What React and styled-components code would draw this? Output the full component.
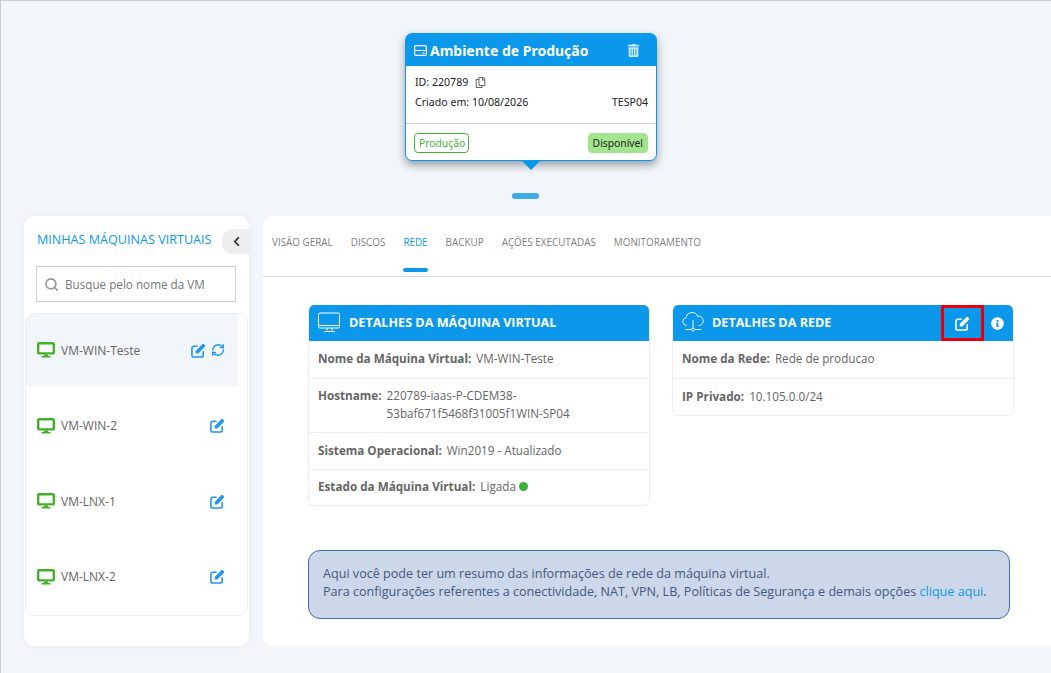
import React from 'react'
import styled, { createGlobalStyle } from 'styled-components'
import { FaTrashAlt, FaRegCopy, FaInfoCircle, FaChevronLeft } from 'react-icons/fa'
import { Search, RefreshCw } from 'lucide-react'

const BLUE = '#0b98eb'

const GlobalStyle = createGlobalStyle`
  html, body {
    margin: 0;
    padding: 0;
    background: #f2f5f9;
  }
  * {
    box-sizing: border-box;
  }
`

const Page = styled.div`
  width: 1051px;
  height: 673px;
  overflow: hidden;
  border-top: 1px solid #c9ccd1;
  border-left: 1px solid #c9ccd1;
  background: #f2f5f9;
  font-family: 'Open Sans', sans-serif;
  display: flex;
  flex-direction: column;
`

const Top = styled.div`
  height: 215px;
  padding-top: 32px;
  display: flex;
  flex-direction: column;
  align-items: center;
`

const EnvCard = styled.div`
  position: relative;
  width: 252px;
  height: 128px;
  margin-left: 10px;
  border: 1px solid ${BLUE};
  border-radius: 7px;
  background: #fff;
  box-shadow: 0 4px 8px rgba(40, 50, 70, 0.45);
  font-family: 'Noto Sans', sans-serif;
  color: #222;

  &::after {
    content: '';
    position: absolute;
    left: 116px;
    bottom: -10px;
    border-left: 9px solid transparent;
    border-right: 9px solid transparent;
    border-top: 9px solid ${BLUE};
  }
`

const EnvHeader = styled.div`
  height: 32px;
  background: ${BLUE};
  border-radius: 5px 5px 0 0;
  color: #fff;
  display: flex;
  align-items: center;
  padding: 0 16px 0 8px;
  gap: 3px;
  font-size: 14px;
  font-weight: 700;

  span {
    flex: 1;
  }
`

const TrashIcon = styled(FaTrashAlt)`
  color: #c4e6fb;
`

const EnvBody = styled.div`
  height: 58px;
  padding: 6px 8px 0 9px;
  border-bottom: 1px solid #c9d2dc;
  font-size: 10.6px;
`

const EnvLine = styled.div`
  height: 20px;
  display: flex;
  align-items: center;
  justify-content: ${p => (p.$between ? 'space-between' : 'flex-start')};
  gap: 7px;

  svg {
    color: #666;
  }
`

const EnvFooter = styled.div`
  display: flex;
  justify-content: space-between;
  padding: 9px 8px 0 8px;
  font-size: 10.3px;
`

const Pill = styled.div`
  height: 20px;
  padding: 0 ${p => (p.$solid ? '4px' : '3px')} 0 4px;
  display: flex;
  align-items: center;
  border-radius: 4px;
  border: 1px solid ${p => (p.$solid ? '#a3e58f' : '#46b03c')};
  background: ${p => (p.$solid ? '#a3e58f' : '#fff')};
  color: ${p => (p.$solid ? '#222' : '#46b03c')};
`

const Handle = styled.div`
  width: 27px;
  height: 6px;
  margin: 32px 0 0 -2px;
  border-radius: 3px;
  background: #3fabeb;
`

const Main = styled.div`
  display: flex;
  gap: 14px;
  padding-left: 23px;
  height: 430px;
`

const Sidebar = styled.aside`
  position: relative;
  width: 225px;
  background: #fff;
  border-radius: 10px;
  box-shadow: 0 0 6px rgba(60, 80, 110, 0.06);
  padding-top: 15px;
`

const SideTitle = styled.div`
  padding-left: 13px;
  height: 18px;
  font-size: 12.6px;
  line-height: 18px;
  color: ${BLUE};
`

const Collapse = styled.button`
  position: absolute;
  top: 13px;
  right: 0;
  width: 27px;
  height: 25px;
  border: 0;
  padding: 0 0 0 2px;
  border-radius: 10px 0 0 10px;
  background: #eeeeee;
  color: #333;
  display: flex;
  align-items: center;
  justify-content: center;
`

const SearchBox = styled.div`
  margin: 17px 13px 11px 12px;
  height: 36px;
  border: 1px solid #ccd0d8;
  display: flex;
  align-items: center;
  gap: 6px;
  padding-left: 7px;
  font-size: 11.7px;
  color: #777;

  svg {
    color: #999;
  }
`

const VmList = styled.div`
  margin: 0 1px;
  height: 303px;
  border: 1px solid #eeeff1;
  border-radius: 10px;
  overflow: hidden;
`

const VmRow = styled.div`
  height: 72px;
  margin-bottom: 3.5px;
  width: ${p => (p.$active ? '212px' : '100%')};
  background: ${p => (p.$active ? '#f2f5f9' : 'transparent')};
  display: flex;
  align-items: center;
  padding: 0 ${p => (p.$active ? '13px' : '22px')} 0 11px;
  gap: 6px;
  font-size: 12px;
  color: #666;
`

const VmName = styled.span`
  flex: 1;
`

const VmActions = styled.div`
  display: flex;
  align-items: center;
  gap: 5px;
  color: #2196f3;
`

const Content = styled.section`
  flex: 1;
  background: #fff;
  border-radius: 10px 0 0 10px;
`

const Tabs = styled.nav`
  height: 61px;
  border-bottom: 1px solid #d8dbdf;
  display: flex;
  gap: 18px;
  padding-left: 9px;
`

const Tab = styled.div`
  position: relative;
  height: 60px;
  font-size: 9.9px;
  line-height: 52px;
  color: ${p => (p.$active ? BLUE : '#808080')};

  &::after {
    content: ${p => (p.$active ? "''" : 'none')};
    position: absolute;
    left: 0;
    right: 0;
    bottom: 4px;
    height: 4px;
    border-radius: 2px;
    background: ${BLUE};
  }
`

const Cards = styled.div`
  display: flex;
  align-items: flex-start;
  gap: 22px;
  padding: 28px 0 0 45px;
  height: 273px;
`

const Card = styled.div`
  width: 342px;
  border: 1px solid #eceef1;
  border-top: 0;
  border-radius: 6px;
  overflow: hidden;
  background: #fff;
`

const CardHeader = styled.header`
  height: 36px;
  padding: 0 0 2px 9px;
  background: ${BLUE};
  color: #fff;
  display: flex;
  align-items: center;
  gap: 8px;
  font-size: 12.6px;
  font-weight: 700;
`

const HeaderTitle = styled.span`
  flex: 1;
`

const EditBox = styled.div`
  width: 43px;
  height: 36px;
  margin-top: 2px;
  border: 3px solid #e8000b;
  display: flex;
  align-items: center;
  justify-content: center;
`

const InfoSlot = styled.div`
  width: 29px;
  margin: 2px 0 0 -8px;
  display: flex;
  justify-content: center;
  padding-right: 3px;
`

const Row = styled.div`
  display: flex;
  align-items: ${p => (p.$top ? 'flex-start' : 'center')};
  gap: 5px;
  min-height: ${p => p.$h || 37}px;
  padding: ${p => (p.$top ? '7px' : '0')} 9px ${p => (p.$top ? '0' : '3px')};
  font-size: 11.7px;
  line-height: 18px;
  color: #666;

  & + & {
    border-top: 1px solid #eceef1;
  }

  b {
    font-weight: 700;
    flex: none;
  }
`

const Dot = styled.i`
  display: inline-block;
  width: 9px;
  height: 9px;
  margin-left: -2px;
  border-radius: 50%;
  background: #3bb03b;
`

const Note = styled.div`
  width: 702px;
  height: 69px;
  margin-left: 45px;
  padding: 14px 14px;
  border: 1px solid #3f6cb0;
  border-radius: 12px;
  background: #ccd7e9;
  font-size: 12.6px;
  line-height: 18px;
  color: #43597e;

  a {
    color: ${BLUE};
  }
`

const ServerIcon = () => (
  <svg width="13" height="11" viewBox="0 0 13 11" fill="none" stroke="#fff" strokeWidth="1.2">
    <rect x="0.6" y="0.6" width="11.8" height="9.8" rx="1.5" />
    <path d="M0.6 5.5h11.8M8.5 8h2.2" />
  </svg>
)

const VmIcon = () => (
  <svg width="18" height="16" viewBox="0 0 18 16" style={{ flex: 'none' }}>
    <rect x="1.2" y="1.2" width="15.6" height="10.2" rx="1" fill="#fff" stroke="#43b02a" strokeWidth="2.4" />
    <path d="M7 12.5h4v1.5h2.5v1.5h-9V14H7z" fill="#43b02a" />
  </svg>
)

const EditIcon = ({ size = 15 }) => (
  <svg width={size} height={size} viewBox="0 0 16 16" style={{ flex: 'none' }}>
    <path
      d="M13 9.5V13a2 2 0 0 1-2 2H3a2 2 0 0 1-2-2V5.5a2 2 0 0 1 2-2h3.5"
      fill="none"
      stroke="currentColor"
      strokeWidth="1.7"
      strokeLinecap="round"
    />
    <path
      d="M5 8.4L11.8 1.5a1.6 1.6 0 0 1 2.3 0l.5.5a1.6 1.6 0 0 1 0 2.3L7.8 11.2H5z"
      fill="currentColor"
    />
  </svg>
)

const MonitorIcon = () => (
  <svg width="23" height="21" viewBox="0 0 23 21" fill="none" stroke="#fff" strokeWidth="1">
    <rect x="0.5" y="1" width="21" height="15" rx="1.5" />
    <path d="M0.5 13.5h21M9 16v2.5M14 16v2.5M6 19.5h11" />
  </svg>
)

const CloudIcon = () => (
  <svg width="22" height="20" viewBox="0 0 22 20" fill="none" stroke="#fff" strokeWidth="0.9">
    <path d="M5 13.5h-0.5a4 4 0 0 1-0.5-7.9 6 6 0 0 1 11.5-1.4 4.6 4.6 0 0 1 2 9.3h-1" />
    <path d="M11 8v8M3 17.5h6M13 17.5h6" />
    <circle cx="11" cy="17.5" r="1.5" />
  </svg>
)

const tabs = ['VISÃO GERAL', 'DISCOS', 'REDE', 'BACKUP', 'AÇÕES EXECUTADAS', 'MONITORAMENTO']
const vms = ['VM-WIN-Teste', 'VM-WIN-2', 'VM-LNX-1', 'VM-LNX-2']

const App = () => (
  <Page>
    <GlobalStyle />
    <Top>
      <EnvCard>
        <EnvHeader>
          <ServerIcon />
          <span>Ambiente de Produção</span>
          <TrashIcon size={13} />
        </EnvHeader>
        <EnvBody>
          <EnvLine>ID: 220789 <FaRegCopy size={11} /></EnvLine>
          <EnvLine $between><span>Criado em: 10/08/2026</span><span>TESP04</span></EnvLine>
        </EnvBody>
        <EnvFooter>
          <Pill>Produção</Pill>
          <Pill $solid>Disponível</Pill>
        </EnvFooter>
      </EnvCard>
      <Handle />
    </Top>
    <Main>
      <Sidebar>
        <SideTitle>MINHAS MÁQUINAS VIRTUAIS</SideTitle>
        <Collapse><FaChevronLeft size={11} /></Collapse>
        <SearchBox><Search size={15} strokeWidth={2.6} />Busque pelo nome da VM</SearchBox>
        <VmList>
          {vms.map((vm, i) => (
            <VmRow key={vm} $active={i === 0}>
              <VmIcon />
              <VmName>{vm}</VmName>
              <VmActions>
                <EditIcon />
                {i === 0 && <RefreshCw size={14} strokeWidth={2.4} />}
              </VmActions>
            </VmRow>
          ))}
        </VmList>
      </Sidebar>
      <Content>
        <Tabs>
          {tabs.map(t => <Tab key={t} $active={t === 'REDE'}>{t}</Tab>)}
        </Tabs>
        <Cards>
          <Card>
            <CardHeader>
              <MonitorIcon />
              <HeaderTitle>DETALHES DA MÁQUINA VIRTUAL</HeaderTitle>
            </CardHeader>
            <Row><b>Nome da Máquina Virtual:</b> VM-WIN-Teste</Row>
            <Row $top $h={54}>
              <b>Hostname:</b>
              <span>220789-iaas-P-CDEM38-<br />53baf671f5468f31005f1WIN-SP04</span>
            </Row>
            <Row><b>Sistema Operacional:</b> Win2019 - Atualizado</Row>
            <Row $h={36}><b>Estado da Máquina Virtual:</b> Ligada<Dot /></Row>
          </Card>
          <Card>
            <CardHeader>
              <CloudIcon />
              <HeaderTitle>DETALHES DA REDE</HeaderTitle>
              <EditBox><EditIcon /></EditBox>
              <InfoSlot><FaInfoCircle size={13} /></InfoSlot>
            </CardHeader>
            <Row><b>Nome da Rede:</b> Rede de producao</Row>
            <Row><b>IP Privado:</b> 10.105.0.0/24</Row>
          </Card>
        </Cards>
        <Note>
          Aqui você pode ter um resumo das informações de rede da máquina virtual.<br />
          Para configurações referentes a conectividade, NAT, VPN, LB, Políticas de Segurança e demais opções <a>clique aqui</a>.
        </Note>
      </Content>
    </Main>
  </Page>
)

export default App
